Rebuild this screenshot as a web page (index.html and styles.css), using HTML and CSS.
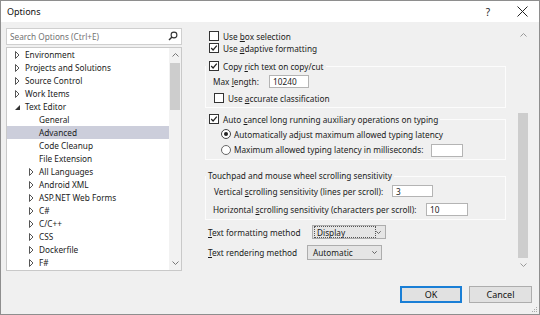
FILE: index.html
```html
<!DOCTYPE html>
<html>
<head>
<meta charset="utf-8">
<title>Options</title>
<link rel="stylesheet" href="styles.css">
</head>
<body>
<div class="window">
  <div class="titlebar">
    <span class="title">Options</span>
    <span class="tb-help">?</span>
    <svg class="tb-close" width="11" height="11" viewBox="0 0 11 11"><path d="M0.5 0.5L10.5 10.5M10.5 0.5L0.5 10.5" stroke="#222" stroke-width="1" fill="none"/></svg>
  </div>
  <div class="main">
    <div class="content">
      <div class="left">
        <div class="search">
          <span class="placeholder">Search Options (Ctrl+E)</span>
          <svg class="search-icon" width="10" height="10" viewBox="0 0 10 10"><circle cx="6" cy="4" r="2.9" stroke="#333" stroke-width="1.1" fill="none"/><path d="M4 6L1 9" stroke="#333" stroke-width="1.4"/></svg>
        </div>
        <div class="tree">
          <ul class="tree-list">
            <li class="node l1"><svg class="exp" width="5" height="8" viewBox="0 0 5 8"><path d="M0.5 0.5L4 4L0.5 7.5Z" stroke="#555" fill="none"/></svg>Environment</li>
            <li class="node l1"><svg class="exp" width="5" height="8" viewBox="0 0 5 8"><path d="M0.5 0.5L4 4L0.5 7.5Z" stroke="#555" fill="none"/></svg>Projects and Solutions</li>
            <li class="node l1"><svg class="exp" width="5" height="8" viewBox="0 0 5 8"><path d="M0.5 0.5L4 4L0.5 7.5Z" stroke="#555" fill="none"/></svg>Source Control</li>
            <li class="node l1"><svg class="exp" width="5" height="8" viewBox="0 0 5 8"><path d="M0.5 0.5L4 4L0.5 7.5Z" stroke="#555" fill="none"/></svg>Work Items</li>
            <li class="node l1"><svg class="exp" width="5" height="8" viewBox="0 0 5 8"><path d="M5 2L5 7L0 7Z" fill="#333"/></svg>Text Editor</li>
            <li class="node l2 leaf">General</li>
            <li class="node l2 leaf selected">Advanced</li>
            <li class="node l2 leaf">Code Cleanup</li>
            <li class="node l2 leaf">File Extension</li>
            <li class="node l2"><svg class="exp" width="5" height="8" viewBox="0 0 5 8"><path d="M0.5 0.5L4 4L0.5 7.5Z" stroke="#555" fill="none"/></svg>All Languages</li>
            <li class="node l2"><svg class="exp" width="5" height="8" viewBox="0 0 5 8"><path d="M0.5 0.5L4 4L0.5 7.5Z" stroke="#555" fill="none"/></svg>Android XML</li>
            <li class="node l2"><svg class="exp" width="5" height="8" viewBox="0 0 5 8"><path d="M0.5 0.5L4 4L0.5 7.5Z" stroke="#555" fill="none"/></svg>ASP.NET Web Forms</li>
            <li class="node l2"><svg class="exp" width="5" height="8" viewBox="0 0 5 8"><path d="M0.5 0.5L4 4L0.5 7.5Z" stroke="#555" fill="none"/></svg>C#</li>
            <li class="node l2"><svg class="exp" width="5" height="8" viewBox="0 0 5 8"><path d="M0.5 0.5L4 4L0.5 7.5Z" stroke="#555" fill="none"/></svg>C/C++</li>
            <li class="node l2"><svg class="exp" width="5" height="8" viewBox="0 0 5 8"><path d="M0.5 0.5L4 4L0.5 7.5Z" stroke="#555" fill="none"/></svg>CSS</li>
            <li class="node l2"><svg class="exp" width="5" height="8" viewBox="0 0 5 8"><path d="M0.5 0.5L4 4L0.5 7.5Z" stroke="#555" fill="none"/></svg>Dockerfile</li>
            <li class="node l2"><svg class="exp" width="5" height="8" viewBox="0 0 5 8"><path d="M0.5 0.5L4 4L0.5 7.5Z" stroke="#555" fill="none"/></svg>F#</li>
          </ul>
          <div class="vscroll tree-scroll">
            <div class="arrow"><svg width="7" height="4" viewBox="0 0 7 4"><path d="M0.5 3.5L3.5 0.5L6.5 3.5" stroke="#777" fill="none"/></svg></div>
            <div class="track"><div class="thumb tree-thumb"></div></div>
            <div class="arrow"><svg width="7" height="4" viewBox="0 0 7 4"><path d="M0.5 0.5L3.5 3.5L6.5 0.5" stroke="#777" fill="none"/></svg></div>
          </div>
        </div>
      </div>

      <div class="right">
        <div class="page">
          <div class="row top-row first">
            <svg class="cb" width="10" height="10" viewBox="0 0 10 10"><rect x="0.5" y="0.5" width="9" height="9" fill="#fff" stroke="#333"/></svg>
            <span>Use <u>b</u>ox selection</span>
          </div>
          <div class="row top-row">
            <svg class="cb" width="10" height="10" viewBox="0 0 10 10"><rect x="0.5" y="0.5" width="9" height="9" fill="#fff" stroke="#333"/><path d="M2.2 5L4.1 7L7.8 2.6" stroke="#222" stroke-width="1.2" fill="none"/></svg>
            <span>Use <u>a</u>daptive formatting</span>
          </div>

          <div class="group g1">
            <div class="row gheader">
              <svg class="cb" width="10" height="10" viewBox="0 0 10 10"><rect x="0.5" y="0.5" width="9" height="9" fill="#fff" stroke="#333"/><path d="M2.2 5L4.1 7L7.8 2.6" stroke="#222" stroke-width="1.2" fill="none"/></svg>
              <span>Copy <u>r</u>ich text on copy/cut</span>
            </div>
            <div class="row field maxlen">
              <span class="lbl lbl-maxlen">Max <u>l</u>ength:</span>
              <span class="input in-maxlen">10240</span>
            </div>
            <div class="row accurate">
              <svg class="cb" width="10" height="10" viewBox="0 0 10 10"><rect x="0.5" y="0.5" width="9" height="9" fill="#fff" stroke="#333"/></svg>
              <span>Use <u>a</u>ccurate classification</span>
            </div>
          </div>

          <div class="group g2">
            <div class="row gheader">
              <svg class="cb" width="10" height="10" viewBox="0 0 10 10"><rect x="0.5" y="0.5" width="9" height="9" fill="#fff" stroke="#333"/><path d="M2.2 5L4.1 7L7.8 2.6" stroke="#222" stroke-width="1.2" fill="none"/></svg>
              <span>Auto <u>c</u>ancel long running auxiliary operations on typing</span>
            </div>
            <div class="row radio-row r1">
              <svg class="rb" width="10" height="10" viewBox="0 0 10 10"><circle cx="5" cy="5" r="4.5" fill="#fff" stroke="#444"/><circle cx="5" cy="5" r="2" fill="#222"/></svg>
              <span>Automatically adjust maximum allowed typing latency</span>
            </div>
            <div class="row radio-row r2">
              <svg class="rb" width="10" height="10" viewBox="0 0 10 10"><circle cx="5" cy="5" r="4.5" fill="#fff" stroke="#666"/></svg>
              <span class="lbl lbl-latency">Maximum allowed typing latency in milliseconds:</span>
              <span class="input in-latency"></span>
            </div>
          </div>

          <div class="group g3">
            <div class="row gheader text-header">
              <span>Touchpad and mouse wheel scrolling sensitivity</span>
            </div>
            <div class="row field vert">
              <span class="lbl lbl-vert">Vertical <u>s</u>crolling sensitivity (lines per scroll):</span>
              <span class="input in-vert">3</span>
            </div>
            <div class="row field horiz">
              <span class="lbl lbl-horiz">Horizontal <u>s</u>crolling sensitivity (characters per scroll):</span>
              <span class="input in-horiz">10</span>
            </div>
          </div>

          <div class="row combo-row fmt">
            <span class="lbl lbl-fmt"><u>T</u>ext formatting method</span>
            <span class="combo combo-fmt focused"><span class="combo-inner">Display</span><svg class="chev" width="5" height="3" viewBox="0 0 5 3"><path d="M0.3 0.3L2.5 2.5L4.7 0.3" stroke="#555" stroke-width="0.9" fill="none"/></svg></span>
          </div>
          <div class="row combo-row rend">
            <span class="lbl lbl-rend"><u>T</u>ext rendering method</span>
            <span class="combo combo-rend"><span class="combo-inner">Automatic</span><svg class="chev" width="5" height="3" viewBox="0 0 5 3"><path d="M0.3 0.3L2.5 2.5L4.7 0.3" stroke="#555" stroke-width="0.9" fill="none"/></svg></span>
          </div>
        </div>

        <div class="vscroll page-scroll">
          <div class="arrow"><svg width="7" height="4" viewBox="0 0 7 4"><path d="M0.5 3.5L3.5 0.5L6.5 3.5" stroke="#999" fill="none"/></svg></div>
          <div class="track"><div class="thumb page-thumb"></div></div>
          <div class="arrow"><svg width="7" height="4" viewBox="0 0 7 4"><path d="M0.5 0.5L3.5 3.5L6.5 0.5" stroke="#999" fill="none"/></svg></div>
        </div>
      </div>
    </div>

    <div class="buttons">
      <button class="btn btn-ok">OK</button>
      <button class="btn btn-cancel">Cancel</button>
    </div>
    <svg class="grip" width="6" height="6" viewBox="0 0 6 6"><rect x="4" y="0" width="1" height="1" fill="#aaa"/><rect x="2" y="2" width="1" height="1" fill="#aaa"/><rect x="4" y="2" width="1" height="1" fill="#aaa"/><rect x="0" y="4" width="1" height="1" fill="#aaa"/><rect x="2" y="4" width="1" height="1" fill="#aaa"/><rect x="4" y="4" width="1" height="1" fill="#aaa"/></svg>
  </div>
</div>
</body>
</html>
```

FILE: styles.css
```css
* { box-sizing: border-box; }
html, body { margin: 0; padding: 0; background: #fff; }
body {
  font-family: "Noto Sans", "Open Sans", "Liberation Sans", sans-serif;
  font-size: 8.25px;
  color: #1b1b1b;
}
u { text-decoration: underline; text-underline-offset: 1px; }

.window {
  width: 540px;
  height: 315px;
  border: 1px solid #8e8e8e;
  display: flex;
  flex-direction: column;
  background: #fff;
}

/* Title bar */
.titlebar {
  height: 21px;
  flex: 0 0 21px;
  display: flex;
  align-items: center;
  background: #fff;
  padding-left: 6px;
}
.title { font-size: 9px; flex: 1; color: #111; }
.tb-help { font-size: 10px; color: #222; margin-right: 27px; }
.tb-close { margin-right: 11px; }

/* Main area */
.main {
  flex: 1;
  background: #f0f0f0;
  display: flex;
  flex-direction: column;
  position: relative;
}
.content {
  display: flex;
  padding: 6px 10px 0 5px;
  height: 249px;
}

/* Left column */
.left {
  width: 176px;
  display: flex;
  flex-direction: column;
}
.search {
  height: 17px;
  background: #fff;
  border: 1px solid #cfcfcf;
  display: flex;
  align-items: center;
  padding: 0 3px 0 3px;
}
.placeholder { flex: 1; color: #737373; }
.search-icon { margin-top: -1px; }

.tree {
  margin-top: 2px;
  height: 224px;
  background: #fff;
  border: 1px solid #c9c9c9;
  display: flex;
}
.tree-list {
  list-style: none;
  margin: 0;
  padding: 0;
  flex: 1;
}
.node {
  height: 13px;
  display: flex;
  align-items: center;
  white-space: nowrap;
}
.node.l1 { padding-left: 8px; }
.node.l2 { padding-left: 22px; }
.node.l2.leaf { padding-left: 32px; }
.exp { margin-right: 5px; flex: 0 0 5px; }
.node.selected { background: #cccedb; }

/* Scrollbars */
.vscroll {
  width: 12px;
  flex: 0 0 12px;
  display: flex;
  flex-direction: column;
}
.tree-scroll { background: #f2f2f2; }
.vscroll .arrow {
  height: 14px;
  flex: 0 0 14px;
  display: flex;
  align-items: center;
  justify-content: center;
}
.vscroll .track { flex: 1; }
.thumb { background: #cdcdcd; margin: 0 1px; }
.tree-thumb { margin-top: 1px; height: 47px; }
.page-scroll .arrow { height: 13px; flex-basis: 13px; }
.page-thumb { margin-top: 72px; height: 145px; }

/* Right panel */
.right {
  flex: 1;
  margin-left: 18px;
  display: flex;
  height: 243px;
}
.page {
  flex: 1;
  padding-left: 5px;
  display: flex;
  flex-direction: column;
  white-space: nowrap;
}
.row {
  display: flex;
  align-items: center;
  height: 12px;
  flex: 0 0 auto;
}
.cb, .rb { flex: 0 0 10px; margin-right: 4px; }
.top-row { padding-left: 4px; }
.top-row.first { margin-top: 2px; }

.group {
  border: 1px solid #fcfcfc;
  margin-right: 11px;
  padding-bottom: 3px;
  display: flex;
  flex-direction: column;
}
.gheader {
  align-self: flex-start;
  background: #f0f0f0;
  padding-left: 3px;
  padding-right: 2px;
  margin-top: -7px;
}
.text-header { padding-left: 2px; margin-top: -8px; }

.g1 { margin-top: 12px; }
.g2 { margin-top: 11px; }
.g3 { margin-top: 16px; }

.lbl { flex: 0 0 auto; overflow: visible; }
.input {
  background: #fff;
  border: 1px solid #b4b4b4;
  display: flex;
  align-items: center;
  padding-left: 3px;
  flex: 0 0 auto;
}

.maxlen { margin-top: 3px; padding-left: 7px; height: 13px; }
.lbl-maxlen { width: 56px; }
.in-maxlen { width: 40px; height: 13px; }
.accurate { margin-top: 4px; padding-left: 8px; }

.radio-row { padding-left: 15px; }
.radio-row .rb { margin-right: 3px; }
.r1 { margin-top: 3px; }
.r2 { margin-top: 3px; height: 13px; }
.lbl-latency { width: 197px; }
.in-latency { width: 32px; height: 13px; margin-top: 2px; }

.vert { margin-top: 4px; padding-left: 8px; }
.lbl-vert { width: 178px; }
.in-vert { width: 41px; height: 12px; }
.horiz { margin-top: 6px; padding-left: 7px; height: 13px; }
.lbl-horiz { width: 213px; }
.in-horiz { width: 42px; height: 13px; }

.combo-row { padding-left: 3px; }
.fmt { margin-top: 5px; height: 14px; }
.rend { margin-top: 6px; height: 15px; }
.lbl-fmt { width: 104px; }
.lbl-rend { width: 99px; }
.combo {
  background: #e5e5e5;
  border: 1px solid #adadad;
  display: flex;
  align-items: center;
  padding: 0 4px 0 1px;
  flex: 0 0 auto;
}
.combo-fmt { width: 74px; height: 14px; }
.combo-rend { width: 75px; height: 15px; }
.combo-inner {
  flex: 1;
  height: 100%;
  display: flex;
  align-items: center;
  padding-left: 3px;
}
.combo-fmt .combo-inner { border: 1px dotted #555; padding-left: 2px; }
.combo-rend .combo-inner { padding-left: 4px; }
.chev { flex: 0 0 5px; }

/* Buttons */
.buttons {
  display: flex;
  justify-content: flex-end;
  gap: 7px;
  padding-right: 7px;
  margin-top: 15px;
}
.btn {
  font-family: inherit;
  font-size: 9px;
  color: #111;
  background: #e1e1e1;
  border: 1px solid #adadad;
  height: 17px;
  padding: 0;
  margin: 0;
}
.btn-ok { width: 62px; border: 2px solid #1a7fd6; }
.btn-cancel { width: 63px; }

.grip { position: absolute; right: 1px; bottom: 1px; }
```
